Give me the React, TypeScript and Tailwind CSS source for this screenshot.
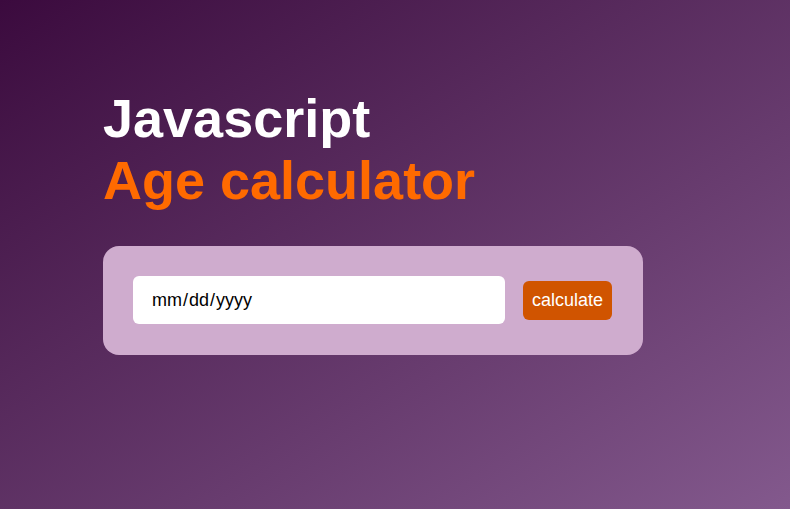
export default function App() {
  return (
    <div className="min-h-[509px] w-full bg-gradient-to-br from-[#3b0a3e] to-[#83598d] font-['Liberation_Sans',Arial,sans-serif]">
      <div className="pl-[103px] pt-[87px]">
        <h1 className="text-[54px] font-bold leading-[62px] text-white">
          Javascript
          <br />
          <span className="text-[#ff6a00]">Age calculator</span>
        </h1>
        <div className="mt-[35px] flex h-[109px] w-[540px] items-start gap-[18px] rounded-2xl bg-[#cfacce] px-[30px] pt-[30px]">
          <input
            type="date"
            className="h-[48px] w-[372px] rounded-md bg-white pl-[18px] pr-[19px] text-[18px] text-black outline-none [&::-webkit-calendar-picker-indicator]:hidden"
          />
          <button
            type="button"
            className="mt-[5px] h-[39px] w-[89px] rounded-md bg-[#d05400] text-[18px] text-white"
          >
            calculate
          </button>
        </div>
      </div>
    </div>
  );
}
